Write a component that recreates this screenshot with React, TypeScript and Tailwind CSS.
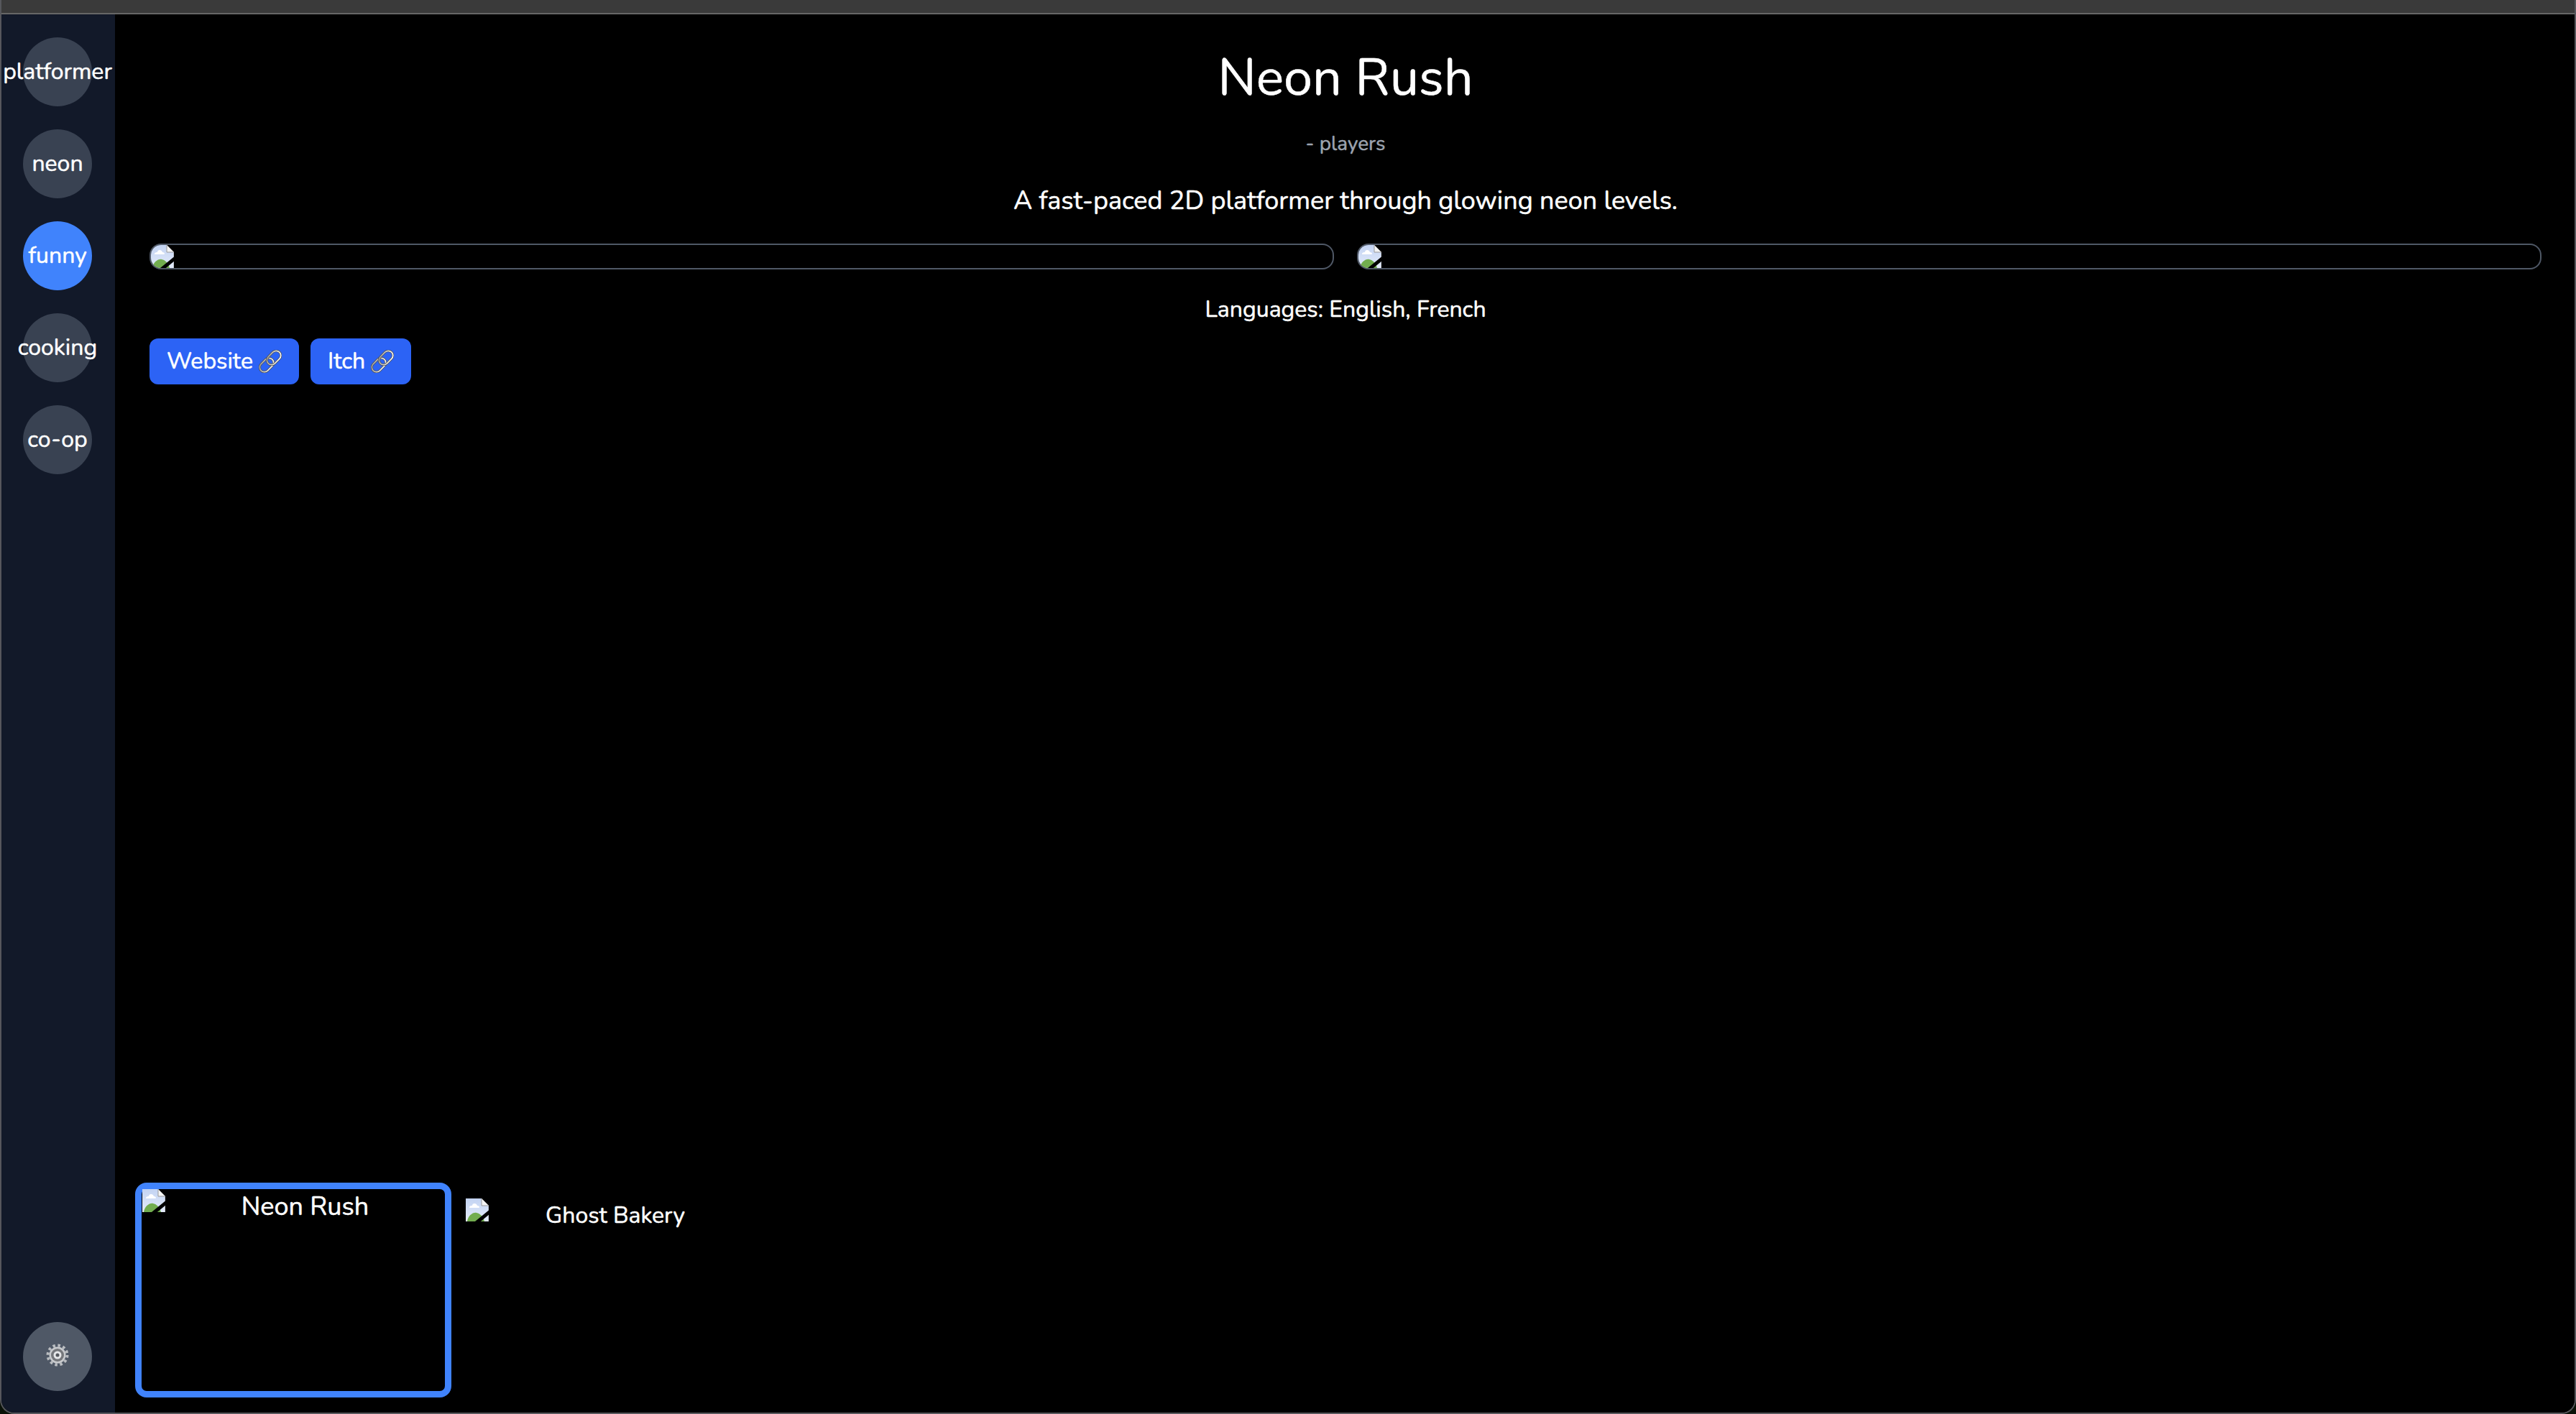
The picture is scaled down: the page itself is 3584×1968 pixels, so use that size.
import { useId } from "react";

const tags = ["platformer", "neon", "funny", "cooking", "co-op"];

function BrokenImage({ className }: { className?: string }) {
    const id = useId();
    return (
        <svg className={className} viewBox="0 0 32 32" width="32" height="32">
            <defs>
                <linearGradient id={id} x1="0" y1="0" x2="0" y2="1">
                    <stop offset="0" stopColor="#c3d3f2" />
                    <stop offset="1" stopColor="#e4ecfb" />
                </linearGradient>
            </defs>
            <path d="M0 0H22L32 10V32H0Z" fill={`url(#${id})`} />
            <path d="M22 0L32 10H22Z" fill="#f4f4f4" stroke="#9a9a9a" strokeWidth="1" />
            <path d="M32 10V32" stroke="#a8a8a8" strokeWidth="1" />
            <path d="M5 13C5 10 8 10 9 10C9 6 15 6 16 10C19 10 20 13 18 13Z" fill="#ffffff" />
            <path d="M2 32C3 24 10 19 15 20C20 21 24 25 26 32Z" fill="#72ad4f" />
            <path d="M12 36L34 18" stroke="#000000" strokeWidth="5" />
        </svg>
    );
}

function LinkIcon() {
    return (
        <svg viewBox="0 0 32 32" width="32" height="32" className="shrink-0">
            <defs>
                <linearGradient id="chain" x1="0" y1="0" x2="1" y2="1">
                    <stop offset="0" stopColor="#8f8f8f" />
                    <stop offset="0.5" stopColor="#d4d4d4" />
                    <stop offset="1" stopColor="#ffffff" />
                </linearGradient>
            </defs>
            <g fill="none">
                <rect x="0" y="14.5" width="22" height="13" rx="6.5" transform="rotate(-45 11 21)" stroke="#4a4a4a" strokeWidth="3.2" />
                <rect x="0" y="14.5" width="22" height="13" rx="6.5" transform="rotate(-45 11 21)" stroke="url(#chain)" strokeWidth="1.8" />
                <rect x="10" y="4.5" width="22" height="13" rx="6.5" transform="rotate(-45 21 11)" stroke="#4a4a4a" strokeWidth="3.2" />
                <rect x="10" y="4.5" width="22" height="13" rx="6.5" transform="rotate(-45 21 11)" stroke="url(#chain)" strokeWidth="1.8" />
            </g>
        </svg>
    );
}

function GearIcon() {
    return (
        <svg viewBox="0 0 32 32" width="32" height="32" className="mb-1">
            <circle cx="16" cy="16" r="13.5" fill="none" stroke="#b9bcc0" strokeWidth="4" strokeDasharray="3.5 3.57" />
            <circle cx="16" cy="16" r="11.5" fill="#c8cacd" />
            <circle cx="16" cy="16" r="9" fill="#75777b" />
            <circle cx="16" cy="16" r="5.5" fill="#e6e7e9" />
            <circle cx="16" cy="16" r="2.5" fill="#55585d" />
        </svg>
    );
}

function LinkButton({ label }: { label: string }) {
    return (
        <a className="inline-flex h-16 items-center gap-2 rounded-xl bg-[#2c63f5] px-6 text-[32px] text-white">
            {label}
            <LinkIcon />
        </a>
    );
}

export default function App() {
    return (
        <div className="h-[1968px] w-[3584px] overflow-hidden bg-[#0a1208] font-['Nunito','Lato','Noto_Sans',sans-serif] text-white [-webkit-text-stroke:0.5px]">
            <div className="flex h-full flex-col overflow-hidden rounded-b-[20px] border-x-2 border-b-2 border-[#56575c]">
                {/* Title bar */}
                <div className="h-5 shrink-0 border-b-2 border-[#666666] bg-[#3a3a3a]" />

                <div className="flex min-h-0 flex-1">
                    {/* Sidebar */}
                    <aside className="flex w-[158px] shrink-0 flex-col items-center justify-between bg-[#121929] pb-[30px] pr-0.5 pt-8">
                        <div className="flex flex-col gap-8">
                            {tags.map((tag) => (
                                <button
                                    key={tag}
                                    className={`flex h-24 w-24 items-center justify-center whitespace-nowrap rounded-full text-[32px] text-white ${
                                        tag === "funny" ? "bg-[#4083fc]" : "bg-[#394252]"
                                    }`}
                                >
                                    {tag}
                                </button>
                            ))}
                        </div>
                        <button className="flex h-24 w-24 items-center justify-center rounded-full bg-[#4f5866]">
                            <GearIcon />
                        </button>
                    </aside>

                    {/* Main */}
                    <main className="flex min-w-0 flex-1 flex-col bg-black">
                        <div className="flex-1 pl-12 pr-[46px] pt-[48px]">
                            <h1 className="text-center text-[72px] leading-[80px]">Neon Rush</h1>
                            <p className="mt-8 text-center text-[28px] leading-10 text-[#9ca3af]">- players</p>
                            <p className="mt-[32px] text-center text-[36px] leading-[56px]">
                                A fast-paced 2D platformer through glowing neon levels.
                            </p>
                            <div className="mt-[31px] grid grid-cols-2 gap-8">
                                <div className="h-9 overflow-hidden rounded-2xl border-2 border-[#4f5866]">
                                    <BrokenImage />
                                </div>
                                <div className="h-9 overflow-hidden rounded-2xl border-2 border-[#4f5866]">
                                    <BrokenImage />
                                </div>
                            </div>
                            <p className="mt-8 text-center text-[32px] leading-12">Languages: English, French</p>
                            <div className="mt-4 flex gap-4">
                                <LinkButton label="Website" />
                                <LinkButton label="Itch" />
                            </div>
                        </div>

                        {/* Game strip */}
                        <div className="flex items-start gap-5 pb-[21px] pl-7">
                            <div className="flex h-[299px] w-[440px] items-start rounded-2xl border-[9px] border-[#4083fc] pl-px">
                                <BrokenImage className="shrink-0" />
                                <span className="mt-px flex-1 text-center text-[36px] leading-12">Neon Rush</span>
                            </div>
                            <div className="mt-[22px] flex w-[384px] items-start">
                                <BrokenImage className="shrink-0" />
                                <span className="flex-1 text-center text-[32px] leading-12">Ghost Bakery</span>
                            </div>
                        </div>
                    </main>
                </div>
            </div>
        </div>
    );
}
